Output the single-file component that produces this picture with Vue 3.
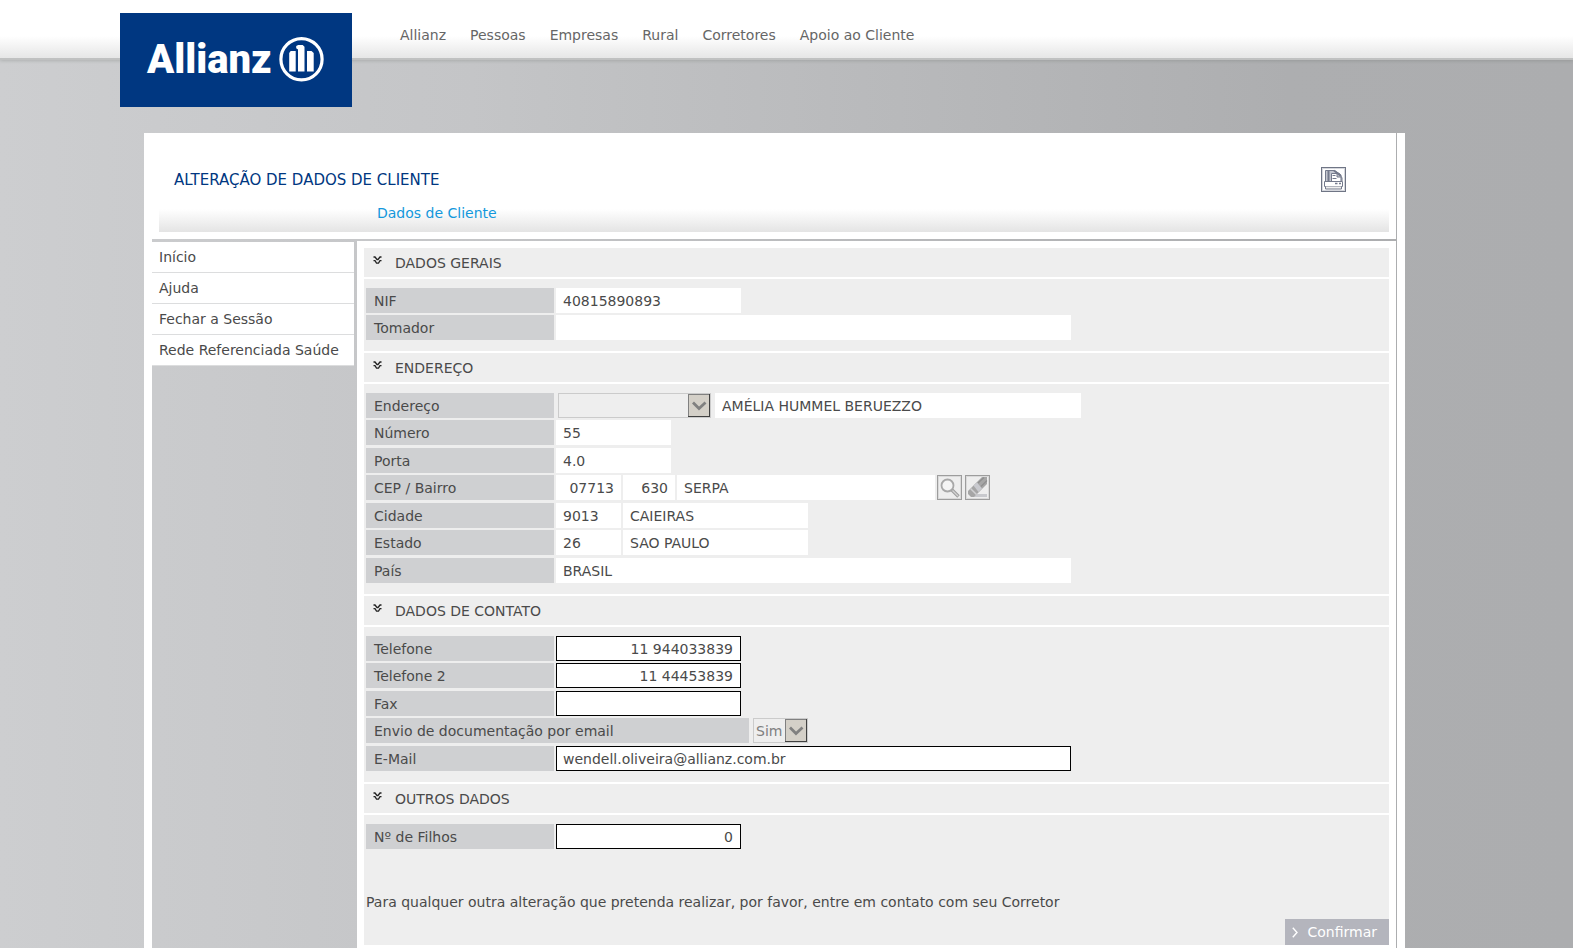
<script setup>
import { reactive } from 'vue'

const nav = ['Allianz', 'Pessoas', 'Empresas', 'Rural', 'Corretores', 'Apoio ao Cliente']
const menu = ['Início', 'Ajuda', 'Fechar a Sessão', 'Rede Referenciada Saúde']

const sections = reactive([
  {
    title: 'DADOS GERAIS',
    rows: [
      { id: 'nif', label: 'NIF', fields: [{ value: '40815890893', size: 'm' }] },
      { id: 'tomador', label: 'Tomador', fields: [{ value: '', size: 'xl' }] }
    ]
  },
  {
    title: 'ENDEREÇO',
    rows: [
      {
        id: 'endereco',
        label: 'Endereço',
        fields: [
          { select: true, value: '', size: 'type', name: 'Tipo de logradouro' },
          { value: 'AMÉLIA HUMMEL BERUEZZO', size: 'street', name: 'Logradouro' }
        ]
      },
      { id: 'numero', label: 'Número', fields: [{ value: '55', size: 's' }] },
      { id: 'porta', label: 'Porta', fields: [{ value: '4.0', size: 's' }] },
      {
        id: 'cep',
        label: 'CEP / Bairro',
        tools: true,
        fields: [
          { value: '07713', size: 'code', right: true },
          { value: '630', size: 'suffix', right: true, name: 'Sufixo do CEP' },
          { value: 'SERPA', size: 'district', name: 'Bairro' }
        ]
      },
      {
        id: 'cidade',
        label: 'Cidade',
        fields: [
          { value: '9013', size: 'code' },
          { value: 'CAIEIRAS', size: 'm', name: 'Nome da cidade' }
        ]
      },
      {
        id: 'estado',
        label: 'Estado',
        fields: [
          { value: '26', size: 'code' },
          { value: 'SAO PAULO', size: 'm', name: 'Nome do estado' }
        ]
      },
      { id: 'pais', label: 'País', fields: [{ value: 'BRASIL', size: 'xl' }] }
    ]
  },
  {
    title: 'DADOS DE CONTATO',
    rows: [
      { id: 'telefone', label: 'Telefone', fields: [{ value: '11 944033839', size: 'm', edit: true, right: true }] },
      { id: 'telefone2', label: 'Telefone 2', fields: [{ value: '11 44453839', size: 'm', edit: true, right: true }] },
      { id: 'fax', label: 'Fax', fields: [{ value: '', size: 'm', edit: true, right: true }] },
      {
        id: 'envio',
        label: 'Envio de documentação por email',
        wide: true,
        fields: [{ select: true, value: 'Sim', size: 'yes' }]
      },
      { id: 'email', label: 'E-Mail', fields: [{ value: 'wendell.oliveira@allianz.com.br', size: 'xl', edit: true }] }
    ]
  },
  {
    title: 'OUTROS DADOS',
    rows: [{ id: 'filhos', label: 'Nº de Filhos', fields: [{ value: '0', size: 'm', edit: true, right: true }] }]
  }
])
</script>

<template>
  <div class="site">
    <header class="top">
      <a class="logo" href="#" aria-label="Allianz">
        <svg width="232" height="94" viewBox="0 0 232 94">
          <text class="wordmark" x="27" y="60">Allianz</text>
          <circle cx="181.500" cy="46.300" r="20.600" fill="none" stroke="#fff" stroke-width="3.200" />
          <path d="M169.200 58.500V40l1.500-2h5v20.500zM178 58.500V36.500l-1.800-1.200V33l2-1h4.500l1.800 1.800v24.700zM187 58.500V38h4.500l2.200 2v18.500z" fill="#fff" />
        </svg>
      </a>
      <nav class="nav">
        <a v-for="item in nav" :key="item" href="#">{{ item }}</a>
      </nav>
    </header>

    <div class="page">
      <div class="head">
        <div class="title-row">
          <h1>ALTERAÇÃO DE DADOS DE CLIENTE</h1>
          <button class="print" type="button" aria-label="Imprimir">
            <svg width="25" height="25" viewBox="0 0 25 25">
              <rect x=".5" y=".5" width="24" height="24" fill="#fff" stroke="#6f7585" />
              <rect x="1.5" y="1.5" width="22" height="22" fill="none" stroke="#d5d7dd" />
              <path d="M4.500 14V3.500H13L19 7l2 4v3" fill="#c4c7d0" stroke="#747a8c" />
              <path d="M7.500 3v11M13 3.500L20 9" fill="none" stroke="#747a8c" stroke-width="2" />
              <path d="M10.500 14V6.500H16V10h4v4" fill="#fff" stroke="#747a8c" />
              <path d="M11.500 8.500h3M11.500 11.500h4" stroke="#747a8c" />
              <path d="M3.500 14.500h18v5h-18z" fill="#fff" stroke="#747a8c" />
              <path d="M14 16.500h2.500M18 16.500h2" stroke="#747a8c" stroke-width="1.500" />
              <path d="M4.500 19.500v2.500h16v-2.500" fill="#eee" stroke="#747a8c" />
            </svg>
          </button>
        </div>
        <div class="tabs"><a href="#">Dados de Cliente</a></div>
      </div>

      <div class="columns">
        <nav class="side">
          <a v-for="item in menu" :key="item" href="#">{{ item }}</a>
        </nav>

        <form class="main" @submit.prevent>
          <section v-for="section in sections" :key="section.title" class="section">
            <h2>
              <svg width="9" height="9" viewBox="0 0 9 9" fill="none" stroke="#222" stroke-width="1.300">
                <path d="M.5 1h1.500l2 2.500h1L7 1h1.500M.5 4.700h1.500l1.500 2.500h2L7 4.700h1.500" />
              </svg>
              {{ section.title }}
            </h2>
            <div class="rows">
              <div v-for="row in section.rows" :key="row.id" class="row">
                <label :for="row.id" :class="{ wide: row.wide }">{{ row.label }}</label>
                <template v-for="(field, i) in row.fields" :key="i">
                  <span v-if="field.select" class="drop" :class="field.size">
                    <select :id="i ? null : row.id" v-model="field.value" :aria-label="field.name" disabled>
                      <option :value="field.value">{{ field.value }}</option>
                    </select>
                    <svg class="arrow" width="22" height="23" viewBox="0 0 22 23">
                      <rect width="22" height="23" fill="#404040" />
                      <rect width="21" height="22" fill="#808080" />
                      <rect x="1" y="1" width="20" height="21" fill="#d4d0c8" />
                      <path d="M5 8.500L11 14.500L17.500 8.500" fill="none" stroke="#808080" stroke-width="2.800" />
                    </svg>
                  </span>
                  <input
                    v-else
                    :id="i ? null : row.id"
                    v-model="field.value"
                    type="text"
                    :aria-label="field.name"
                    :readonly="!field.edit"
                    :class="[field.size, { edit: field.edit, right: field.right }]"
                  />
                </template>
                <span v-if="row.tools" class="tools">
                  <button type="button" aria-label="Buscar">
                    <svg width="25" height="25" viewBox="0 0 25 25">
                      <circle cx="10.500" cy="10.500" r="6" fill="#f4f4f4" stroke="#a8a8a8" stroke-width="1.800" />
                      <path d="M15 15l6.500 6.500" stroke="#a0a0a0" stroke-width="3.600" />
                      <path d="M15.500 15.500l5.500 5.500" stroke="#d4d4d4" stroke-width="1.200" />
                    </svg>
                  </button>
                  <button type="button" aria-label="Limpar">
                    <svg width="25" height="25" viewBox="0 0 25 25">
                      <path d="M12 19h10v3H8z" fill="#c8c9cd" />
                      <path d="M3 16L17 2h5v7L9 22H6l-3-3z" fill="#a6a6a6" />
                      <path d="M8.500 10.500l3.500-3 5 6-3.500 3.500z" fill="#c9cacf" />
                      <path d="M13 8l6-5.500M16 11.500l6-6" stroke="#8f8f8f" stroke-width="1.200" />
                      <path d="M5.500 13.500l6 6" stroke="#d0d0d2" stroke-width="1.500" />
                    </svg>
                  </button>
                </span>
              </div>
            </div>
          </section>
          <div class="closing">
            <p>Para qualquer outra alteração que pretenda realizar, por favor, entre em contato com seu Corretor</p>
            <button class="confirm" type="submit">
              <svg width="6" height="11" viewBox="0 0 6 11"><path d="M.8 .8L5 5.500L.8 10.200" fill="none" stroke="#fff" stroke-width="1.400" /></svg>
              Confirmar
            </button>
          </div>
        </form>
      </div>
    </div>
  </div>
</template>

<style>
body {
  margin: 0;
}
</style>

<style scoped>
.site,
.site * {
  box-sizing: border-box;
}
.site {
  display: flex;
  flex-direction: column;
  min-height: 100vh;
  font-family: Verdana, "DejaVu Sans", sans-serif;
  font-size: 14px;
  color: #4a4a4a;
  background: linear-gradient(90deg, #cdced0 0%, #c4c5c7 30%, #adaeb0 82%, #acadaf 100%);
}
a {
  color: inherit;
  text-decoration: none;
}
button {
  padding: 0;
  border: 0;
  background: none;
  font: inherit;
  cursor: pointer;
}
svg {
  display: block;
  flex: none;
}
.top {
  display: flex;
  height: 60px;
  padding: 13px 120px 0;
  background: linear-gradient(#fff 36px, #e6e6e6 58px);
  border-bottom: 2px solid #c0c1c1;
  box-shadow: 0 1px 3px rgba(90, 100, 90, 0.25);
}
.logo {
  height: 94px;
  background: #003781;
}
.wordmark {
  font-family: Roboto, sans-serif;
  font-weight: 900;
  font-size: 40px;
  fill: #fff;
}
.nav {
  display: flex;
  gap: 24px;
  margin-left: 48px;
  line-height: 44px;
  color: #666;
}
.page {
  display: flex;
  flex: 1;
  flex-direction: column;
  gap: 2px;
  margin: 73px 168px 0 144px;
  padding-right: 1px;
  border: solid #fff;
  border-width: 0 8px;
}
.head {
  padding: 34px 7px 7px;
  background: #fff;
}
.title-row {
  display: flex;
  align-items: center;
  justify-content: space-between;
  padding: 0 43px 0 15px;
}
h1 {
  margin: 0;
  font-size: 15px;
  line-height: 24px;
  font-weight: 400;
  color: #003781;
}
.tabs {
  height: 40px;
  padding-left: 218px;
  line-height: 42px;
  color: #1398dc;
  background: linear-gradient(#fff 17px, #e4e4e4);
}
.columns {
  display: flex;
  flex: 1;
  gap: 3px;
}
.side {
  width: 202px;
  margin-top: 1px;
}
.side a {
  display: block;
  height: 31px;
  padding-left: 7px;
  line-height: 30px;
  background: #fff;
  border-bottom: 1px solid #dcddde;
}
.main {
  flex: 1;
  min-width: 0;
  padding: 7px 7px 3px;
  background: #fff;
}
h2 {
  display: flex;
  align-items: center;
  gap: 13px;
  height: 29px;
  margin: 0 0 2px;
  padding-left: 9px;
  font-size: 14px;
  font-weight: 400;
  background: #eee;
}
h2 svg {
  margin-bottom: 4px;
}
.rows {
  padding: 9px 2px 11px;
  background: #eee;
}
.section:not(:last-of-type) {
  margin-bottom: 2px;
}
.row {
  display: flex;
  gap: 2px;
  height: 25px;
}
.row:not(:last-child) {
  margin-bottom: 2px;
}
.row:nth-child(even):not(:last-child) {
  margin-bottom: 3px;
}
label {
  width: 188px;
  padding-left: 8px;
  line-height: 26px;
  background: #cfd0d2;
}
label.wide {
  width: 383px;
}
input {
  height: 25px;
  padding: 0 6px;
  border: 1px solid #fff;
  border-radius: 0;
  outline: 0;
  font: inherit;
  color: inherit;
  background: #fff;
}
input.edit {
  padding-right: 7px;
  border-color: #000;
}
.right {
  text-align: right;
}
.s { width: 115px; }
.m { width: 185px; }
.xl { width: 515px; }
.code { width: 65px; }
.suffix { width: 52px; }
.district { width: 258px; }
.street { width: 366px; }
.type { width: 153px; }
.yes { width: 55px; }
.drop {
  position: relative;
  margin: 0 2px;
}
select {
  width: 100%;
  height: 25px;
  padding: 0 0 0 2px;
  border: 1px solid #cbcbcb;
  border-radius: 0;
  appearance: none;
  font: inherit;
  color: #808080;
  background: #eee;
  opacity: 1;
}
.arrow {
  position: absolute;
  top: 1px;
  right: 1px;
}
.tools {
  display: flex;
  gap: 3px;
}
.tools button {
  box-shadow: inset 0 0 0 1px #9d9d9d, inset 0 0 0 2px #dadada;
}
.closing {
  display: flex;
  flex-direction: column;
  padding: 30px 0 0 2px;
  background: #eee;
}
.closing p {
  margin: 0;
  line-height: 24px;
}
.confirm {
  display: flex;
  align-items: center;
  align-self: flex-end;
  gap: 9px;
  height: 26px;
  margin-top: 5px;
  padding: 0 12px 0 7px;
  color: #fff;
  background: #b4b5bd;
}
</style>
